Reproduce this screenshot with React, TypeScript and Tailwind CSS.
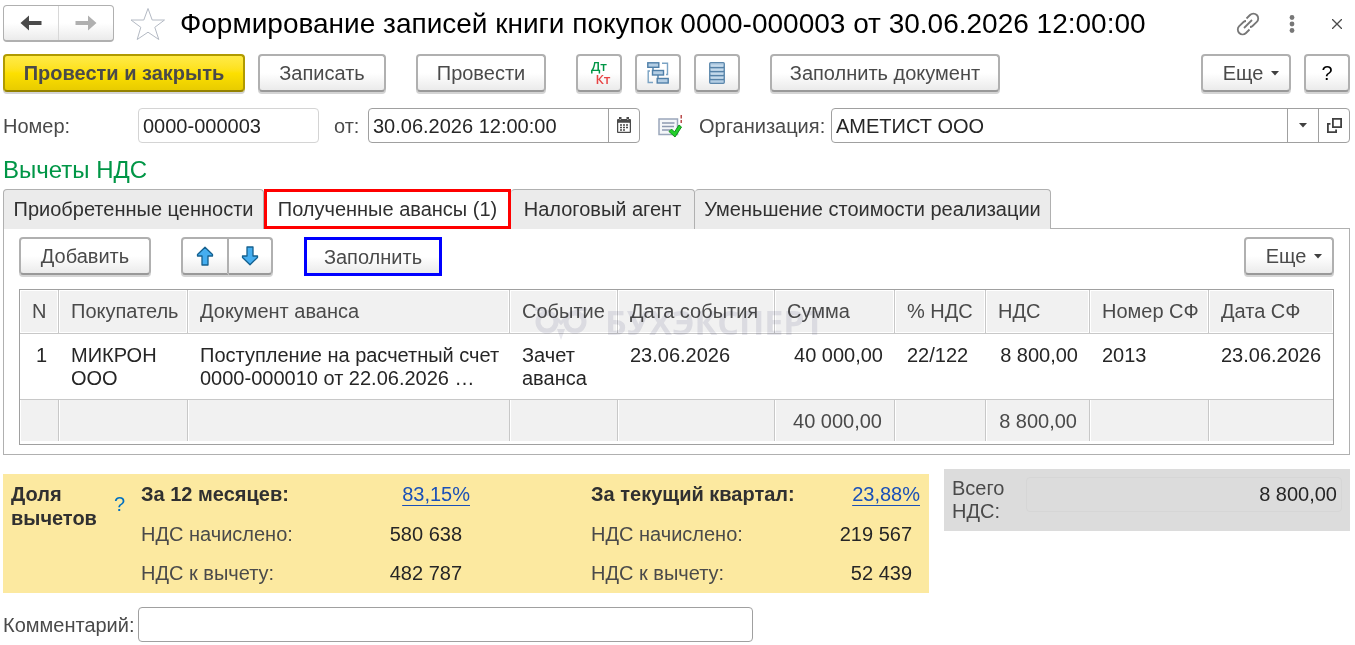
import { useState } from 'react';
import type { ReactNode } from 'react';

const buttonBase =
  'flex h-[38px] shrink-0 items-center justify-center rounded border-2 border-[#b0b0b0] border-b-[#999] bg-linear-to-b from-white from-50% to-[#ebebeb] text-[#4a4a4a] shadow-[0_2px_0_#d4d4d4]';

interface ButtonProps {
  children: ReactNode;
  className?: string;
  label?: string;
}

function Button({ children, className = '', label }: ButtonProps) {
  return (
    <button type="button" aria-label={label} className={`${buttonBase} ${className}`}>
      {children}
    </button>
  );
}

function Caret() {
  return (
    <svg width="8" height="5" viewBox="0 0 8 5" fill="#404040" aria-hidden="true">
      <path d="M0 0h8L4 4.5z" />
    </svg>
  );
}

function MoreButton() {
  return (
    <Button className="w-[90px] gap-2 pl-2.5">
      Еще
      <span>
        <Caret />
      </span>
    </Button>
  );
}

function NavArrow({ color, flip }: { color: string; flip?: boolean }) {
  return (
    <svg width="22" height="16" viewBox="0 0 22 16" fill={color} className={flip ? 'rotate-180' : ''} aria-hidden="true">
      <path d="M.5 8 9 .5V6h12.500v4H9v5.500z" />
    </svg>
  );
}

function MoveArrow({ down }: { down?: boolean }) {
  return (
    <svg width="18" height="20" viewBox="0 0 18 20" className={down ? 'rotate-180' : ''} aria-hidden="true">
      <path d="M9 1.200 16.500 8.500v1.500H12V19H6v-9H1.500V8.500z" fill="#45aef0" stroke="#14608f" strokeWidth="1.300" strokeLinejoin="round" />
    </svg>
  );
}

function StarIcon() {
  return (
    <svg width="36" height="34" viewBox="0 0 36 34" fill="none" stroke="#b4bac4" strokeWidth="1" aria-hidden="true">
      <path d="M18 1.500 22.200 13H34.500L24.800 20.300 28.800 32.500 18 25.200 7.200 32.500 10.800 20.300 1 13H13.800z" />
    </svg>
  );
}

function LinkIcon() {
  return (
    <svg width="24" height="24" viewBox="0 0 24 24" fill="none" stroke="#777" strokeWidth="1.800" aria-hidden="true">
      <path d="M10.500 6.500 14 3a4.700 4.700 0 0 1 6.800 6.800L16.500 14a4 4 0 0 1-2.500 1" />
      <path d="M13.500 17.500 10 21a4.700 4.700 0 0 1-6.800-6.800L7.500 10a4 4 0 0 1 2.500-1" />
      <path d="m8 16 8-8" />
    </svg>
  );
}

function StructureIcon() {
  return (
    <svg width="22" height="22" viewBox="0 0 22 22" fill="#b4cee4" stroke="#4f7fa8" strokeWidth="1.400" aria-hidden="true">
      <path d="M15 1.200h5.500V12.500H19M6 20.500H1.200V9H3" fill="none" stroke="#7ba3c4" />
      <path d="M6 6v2.500M11 13v3.500" fill="none" />
      <rect x=".8" y=".8" width="11" height="4.500" />
      <rect x="5.500" y="8.500" width="11" height="4.500" />
      <rect x="10.200" y="16.500" width="11" height="4.500" />
    </svg>
  );
}

function ListIcon() {
  return (
    <svg width="16" height="22" viewBox="0 0 16 22" aria-hidden="true">
      <rect x=".7" y=".7" width="14.600" height="20.600" rx="1" fill="#b4cee4" stroke="#5d88ac" strokeWidth="1.300" />
      <path d="M1 5.500h14M1 9.500h14M1 13.500h14M1 17.500h14" stroke="#5682a8" strokeWidth="1.500" />
      <path d="M2 4h12M2 8h12M2 12h12M2 16h12" stroke="#d6e6f2" />
    </svg>
  );
}

function CalendarIcon() {
  return (
    <svg width="14" height="18" viewBox="0 0 14 18" aria-hidden="true">
      <path d="M2 0h2.500v2h5V0H12v2h1a1 1 0 0 1 1 1v12a1 1 0 0 1-1 1H1a1 1 0 0 1-1-1V3a1 1 0 0 1 1-1h1z" fill="#4a4a4a" />
      <path d="M2.500 2.500h1.500M10 2.500h1.500M1.500 6h11v8.500h-11z" fill="#fff" stroke="#fff" strokeWidth=".5" />
      <path d="M3 8h8M3 10.500h8M3 13h5" stroke="#4a4a4a" strokeWidth="1.500" strokeDasharray="2 1" />
    </svg>
  );
}

function PostedIcon() {
  return (
    <svg width="24" height="26" viewBox="0 0 24 26" fill="none" aria-hidden="true">
      <path d="M1 6h18.500v15.500H1z" fill="#f4f6f9" stroke="#9aa7bb" strokeWidth="1.500" />
      <path d="M4 10h12.500M4 13.500h12M4 17h8" stroke="#8c99b0" strokeWidth="1.500" />
      <path d="M23.200 2v3.500M23.200 7v3" stroke="#b03030" strokeWidth="1.300" />
      <path d="m11 18.500 2.500-2.500 3 3L21 12l2.500 2-6.500 10z" fill="#22d02b" stroke="#10901a" strokeLinejoin="round" />
    </svg>
  );
}

function OpenIcon() {
  return (
    <svg width="15" height="15" viewBox="0 0 15 15" fill="none" stroke="#404040" strokeWidth="1.800" aria-hidden="true">
      <path d="M5.900.9h8.200v8.200H5.900z" />
      <path d="M3.500 5.900H.9v8.200h8.200v-2.600" />
    </svg>
  );
}

function Watermark() {
  return (
    <div className="pointer-events-none absolute top-[14px] left-[515px] flex items-start gap-[18px] text-[#e8e8ee] mix-blend-multiply">
      <svg width="52" height="36" viewBox="0 0 52 36" fill="none" stroke="currentColor" strokeWidth="5" aria-hidden="true">
        <circle cx="12" cy="18" r="9" />
        <circle cx="40" cy="18" r="9" />
        <path d="M0 5c6 0 16 2 26 14C36 7 46 5 52 5" strokeWidth="3" />
        <path d="m22 25 4 11 4-11z" fill="currentColor" stroke="none" />
      </svg>
      <span className="font-['Open_Sans',sans-serif] text-[34px] leading-[36px] font-bold">БУХЭКСПЕРТ</span>
    </div>
  );
}

const tabs = [
  { title: 'Приобретенные ценности', width: 'w-[261px]' },
  { title: 'Полученные авансы (1)', width: 'w-[247px]' },
  { title: 'Налоговый агент', width: 'w-[184px]' },
  { title: 'Уменьшение стоимости реализации', width: 'w-[356px]' },
];

const columns = [
  { title: 'N', width: 'w-[39px]' },
  { title: 'Покупатель', width: 'w-[129px]' },
  { title: 'Документ аванса', width: '' },
  { title: 'Событие', width: 'w-[108px]' },
  { title: 'Дата события', width: 'w-[157px]' },
  { title: 'Сумма', width: 'w-[120px]' },
  { title: '% НДС', width: 'w-[91px]' },
  { title: 'НДС', width: 'w-[104px]' },
  { title: 'Номер СФ', width: 'w-[119px]' },
  { title: 'Дата СФ', width: 'w-[124px]' },
];

const row = [
  '1',
  'МИКРОН ООО',
  'Поступление на расчетный счет 0000-000010 от 22.06.2026 …',
  'Зачет аванса',
  '23.06.2026',
  '40 000,00',
  '22/122',
  '8 800,00',
  '2013',
  '23.06.2026',
];

const totals = ['', '', '', '', '', '40 000,00', '', '8 800,00', '', ''];

const cellAlign = (index: number) => (index === 5 || index === 7 ? 'pr-3 text-right' : 'text-left');

function AdvancesTable() {
  return (
    <div className="relative border border-[#a0a0a0] pb-[3px]">
      <table className="w-full table-fixed border-separate border-spacing-0">
        <colgroup>
          {columns.map((column) => (
            <col key={column.title} className={column.width} />
          ))}
        </colgroup>
        <thead>
          <tr className="h-11 bg-[#f1f1f1] text-[#4a4a4a]">
            {columns.map((column) => (
              <th
                key={column.title}
                scope="col"
                className="border-r border-b border-[#c8c8c8] pb-0.5 pl-3 text-left font-normal whitespace-nowrap shadow-[inset_0_0_0_1px_white] last:border-r-0"
              >
                {column.title}
              </th>
            ))}
          </tr>
        </thead>
        <tbody>
          <tr className="h-[66px] align-top text-[#262626]">
            {row.map((value, index) => (
              <td key={index} className={`border-b border-[#c8c8c8] pt-2.5 leading-[23px] ${cellAlign(index)} ${index === 0 ? 'pl-4' : 'pl-3'}`}>
                {value}
              </td>
            ))}
          </tr>
        </tbody>
        <tfoot>
          <tr className="h-[41px] bg-[#f1f1f1] text-[#4a4a4a]">
            {totals.map((value, index) => (
              <td key={index} className={`border-r border-[#c8c8c8] pl-3 shadow-[inset_1px_0_0_white] last:border-r-0 ${cellAlign(index)}`}>
                {value}
              </td>
            ))}
          </tr>
        </tfoot>
      </table>
      <Watermark />
    </div>
  );
}

interface ShareProps {
  title: string;
  percent: string;
  accrued: string;
  deducted: string;
}

function Share({ title, percent, accrued, deducted }: ShareProps) {
  return (
    <dl className="grid w-[329px] grid-cols-[auto_auto] content-start justify-between leading-6 text-[#4a4a4a]">
      <dt className="font-bold text-[#303030]">{title}</dt>
      <dd className="text-right">
        <a href="#share" className="text-[#1a50b8] underline decoration-1 underline-offset-4">
          {percent}
        </a>
      </dd>
      <dt className="pt-4">НДС начислено:</dt>
      <dd className="pt-4 pr-2 text-right text-[#262626]">{accrued}</dd>
      <dt className="pt-[15px]">НДС к вычету:</dt>
      <dd className="pt-[15px] pr-2 text-right text-[#262626]">{deducted}</dd>
    </dl>
  );
}

export default function App() {
  const [activeTab, setActiveTab] = useState(1);

  return (
    <main className="bg-white pr-[5px] pl-[3px] font-['Liberation_Sans',Arial,sans-serif] text-[20px] leading-6 text-[#4a4a4a]">
      <header className="flex items-center pt-[5px]">
        <div className="flex h-[37px] w-[111px] shrink-0 rounded border border-[#b0b0b0] border-b-2 bg-linear-to-b from-white from-50% to-[#ebebeb]">
          <button type="button" aria-label="Назад" className="flex flex-1 items-center justify-center border-r border-[#d8d8d8]">
            <NavArrow color="#4a4a4a" />
          </button>
          <button type="button" aria-label="Вперед" className="flex flex-1 items-center justify-center">
            <NavArrow color="#b0b0b0" flip />
          </button>
        </div>
        <button type="button" aria-label="В избранное" className="ml-4 shrink-0">
          <StarIcon />
        </button>
        <h1 className="ml-3.5 flex-1 text-[28px] leading-9 whitespace-nowrap text-black">
          Формирование записей книги покупок 0000-000003 от 30.06.2026 12:00:00
        </h1>
        <div className="flex shrink-0 items-center pr-2">
          <button type="button" aria-label="Ссылка">
            <LinkIcon />
          </button>
          <button type="button" aria-label="Меню" className="ml-7">
            <svg width="8" height="18" viewBox="0 0 8 18" fill="#777" aria-hidden="true">
              <circle cx="4" cy="2.500" r="2.400" />
              <circle cx="4" cy="9" r="2.400" />
              <circle cx="4" cy="15.500" r="2.400" />
            </svg>
          </button>
          <button type="button" aria-label="Закрыть" className="ml-9">
            <svg width="10" height="10" viewBox="0 0 10 10" stroke="#4a4a4a" strokeWidth="1.300" aria-hidden="true">
              <path d="m0 0 10 10M10 0 0 10" />
            </svg>
          </button>
        </div>
      </header>

      <div className="mt-3 flex gap-[30px]">
        <div className="flex gap-[13px]">
          <button
            type="button"
            className="h-[38px] w-[242px] rounded border-2 border-[#b09a00] border-b-[#948200] bg-linear-to-b from-[#ffea45] via-[#fde000] to-[#e8cc00] font-bold text-[#4a4a4a] shadow-[0_2px_0_#d4d4d4]"
          >
            Провести и закрыть
          </button>
          <Button className="w-32">Записать</Button>
        </div>
        <Button className="w-[130px]">Провести</Button>
        <div className="flex gap-[13px]">
          <Button className="w-[46px]" label="Дебет и кредит">
            <span className="flex flex-col font-['Open_Sans',sans-serif] text-[13px] leading-[13px] font-semibold">
              <span className="text-[#009646]">Дт</span>
              <span className="pl-2 text-[#e84545]">Кт</span>
            </span>
          </Button>
          <Button className="w-[46px]" label="Структура подчиненности">
            <StructureIcon />
          </Button>
          <Button className="w-[46px]" label="Реестр">
            <ListIcon />
          </Button>
        </div>
        <Button className="w-[230px]">Заполнить документ</Button>
        <div className="ml-auto flex gap-[13px]">
          <MoreButton />
          <Button className="w-[46px] text-black">?</Button>
        </div>
      </div>

      <div className="mt-4 flex h-[35px] items-center">
        <label htmlFor="number" className="w-[135px] shrink-0">
          Номер:
        </label>
        <input id="number" defaultValue="0000-000003" className="h-full w-[181px] rounded border border-[#d4d4d4] px-1 pt-px text-[#262626]" />
        <label htmlFor="date" className="ml-[15px] w-[34px] shrink-0">
          от:
        </label>
        <div className="flex h-full w-[272px] shrink-0 rounded border border-[#a0a0a0]">
          <input id="date" defaultValue="30.06.2026 12:00:00" className="w-0 flex-1 px-1 text-[#262626]" />
          <button type="button" aria-label="Календарь" className="flex w-[31px] items-center justify-center border-l border-[#a0a0a0]">
            <CalendarIcon />
          </button>
        </div>
        <span className="ml-[18px] shrink-0">
          <PostedIcon />
        </span>
        <label htmlFor="company" className="ml-[17px] w-[132px] shrink-0">
          Организация:
        </label>
        <div className="flex h-full flex-1 rounded border border-[#a0a0a0]">
          <input id="company" defaultValue="АМЕТИСТ ООО" className="w-0 flex-1 px-1 text-[#262626]" />
          <button type="button" aria-label="Выбрать" className="flex w-[31px] items-center justify-center border-l border-[#a0a0a0]">
            <Caret />
          </button>
          <button type="button" aria-label="Открыть" className="flex w-[31px] items-center justify-center border-l border-[#a0a0a0]">
            <OpenIcon />
          </button>
        </div>
      </div>

      <h2 className="mt-3 text-[24px] leading-[30px] text-[#009646]">Вычеты НДС</h2>

      <div role="tablist" className="mt-1 flex h-10">
        {tabs.map((tab, index) => (
          <button
            key={tab.title}
            type="button"
            role="tab"
            aria-selected={index === activeTab}
            onClick={() => setActiveTab(index)}
            className={`${tab.width} whitespace-nowrap text-[#303030] ${
              index === activeTab
                ? 'relative border-3 border-[#ff0000] bg-white'
                : 'rounded-t-sm border-t border-r border-[#b0b0b0] bg-[#ebebeb] pb-px first:border-l'
            }`}
          >
            {tab.title}
          </button>
        ))}
      </div>

      <section className="-mt-px border border-[#b0b0b0] px-[15px] pt-2 pb-[9px]">
        <div className="flex items-start">
          <Button className="w-[132px]">Добавить</Button>
          <div className="ml-[30px] flex">
            <Button className="w-12 rounded-r-none" label="Вверх">
              <MoveArrow />
            </Button>
            <Button className="w-11 rounded-l-none border-l-0" label="Вниз">
              <MoveArrow down />
            </Button>
          </div>
          <button
            type="button"
            className="ml-[31px] h-[39px] w-[138px] border-3 border-[#0000ff] bg-linear-to-b from-white from-50% to-[#ebebeb]"
          >
            Заполнить
          </button>
          <div className="ml-auto">
            <MoreButton />
          </div>
        </div>
        <div className="mt-[13px]">
          <AdvancesTable />
        </div>
      </section>

      <div className="mt-3.5 flex items-start gap-[15px]">
        <section className="mt-[5px] flex min-h-[119px] flex-1 bg-[#fce9a0] pt-2 pr-[9px] pl-2">
          <h3 className="w-[103px] font-bold text-[#303030]">Доля вычетов</h3>
          <button type="button" className="mt-2.5 h-6 w-[27px] text-left text-[#0070c0]" aria-label="Справка">
            ?
          </button>
          <div className="flex flex-1 justify-between">
            <Share title="За 12 месяцев:" percent="83,15%" accrued="580 638" deducted="482 787" />
            <Share title="За текущий квартал:" percent="23,88%" accrued="219 567" deducted="52 439" />
          </div>
        </section>
        <div className="flex h-[62px] w-[406px] gap-2 bg-[#dcdcdc] px-2 pt-2">
          <label htmlFor="total" className="w-[66px] leading-[23px]">
            Всего НДС:
          </label>
          <input
            id="total"
            readOnly
            defaultValue="8 800,00"
            className="h-[35px] w-0 flex-1 rounded border border-[#d6d6d6] px-1 text-right text-[#262626]"
          />
        </div>
      </div>

      <div className="mt-3.5 flex items-center">
        <label htmlFor="comment" className="w-[135px] shrink-0">
          Комментарий:
        </label>
        <input id="comment" className="h-[35px] w-[615px] rounded border border-[#a0a0a0] px-1" />
      </div>
    </main>
  );
}
